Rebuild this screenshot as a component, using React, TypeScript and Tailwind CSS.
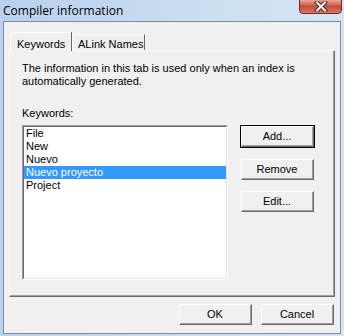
import React from 'react';

const FONT = { fontFamily: '"Liberation Sans", Arial, sans-serif' };

const KEYWORDS = ['File', 'New', 'Nuevo', 'Nuevo proyecto', 'Project'];
const SELECTED = 'Nuevo proyecto';

function Button({ label, isDefault = false }: { label: string; isDefault?: boolean }) {
  return (
    <div
      className={
        'h-[23px] w-[75px] ' + (isDefault ? 'border border-[#000]' : 'border border-transparent')
      }
    >
      <div className="h-full w-full border-l border-t border-white border-r-[#696969] border-b-[#696969] border-r border-b">
        <div className="flex h-full w-full items-center justify-center border-r border-b border-[#a0a0a0] bg-[#f0f0f0] text-[11px] text-black">
          {label}
        </div>
      </div>
    </div>
  );
}

function CloseButton() {
  return (
    <div className="mt-[-1px] flex h-[15px] w-[43px] items-center justify-center rounded-b-[4px] border border-[#6b2d25] bg-gradient-to-b from-[#e8a699] via-[#c8493a] to-[#d8786a]">
      <svg width="14" height="11" viewBox="0 0 14 11">
        <path d="M3 1.5 L11 9.5 M11 1.5 L3 9.5" stroke="#5a2019" strokeWidth="4" strokeLinecap="square" />
        <path d="M3 1.5 L11 9.5 M11 1.5 L3 9.5" stroke="#ffffff" strokeWidth="2" strokeLinecap="square" />
      </svg>
    </div>
  );
}

export default function App() {
  return (
    <div
      className="flex h-[336px] w-[344px] flex-col bg-gradient-to-r from-[#b9d1ec] via-[#c9dcf1] to-[#d6e5f5]"
      style={FONT}
    >
      {/* title bar */}
      <div className="flex h-[21px] items-start justify-between pl-[3px] pr-[2px]">
        <span className="pt-[2px] text-[12px] text-black" style={{ fontFamily: '"Open Sans", "Noto Sans", sans-serif' }}>
          Compiler information
        </span>
        <CloseButton />
      </div>

      {/* client area */}
      <div className="mx-[3px] mb-[2px] flex flex-1 flex-col border border-[#7d8b9c] bg-[#f0f0f0] px-[5px] pt-[10px]">
        {/* tabs */}
        <div className="relative z-10 flex h-[18px] items-end">
          <div className="mb-[-1px] ml-[1px] flex h-[19px] w-[61px] items-start border-l border-t border-white bg-[#f0f0f0] pl-[6px] pt-[3px] text-[11px] text-black shadow-[1px_0_0_#696969]">
            Keywords
          </div>
          <div className="ml-[1px] flex h-[16px] w-[73px] items-start border-l border-t border-r border-white border-r-[#696969] pl-[5px] pt-[1px] text-[11px] text-black">
            ALink Names
          </div>
        </div>

        {/* panel */}
        <div className="h-[247px] border-l border-t border-white border-r border-b border-r-[#696969] border-b-[#696969]">
          <div className="h-full border-r border-b border-[#a0a0a0] pl-[12px] pt-[11px]">
            <p className="text-[11px] leading-[13px] text-black">
              The information in this tab is used only when an index is
              <br />
              automatically generated.
            </p>
            <p className="mt-[19px] text-[11px] leading-[13px] text-black">Keywords:</p>
            <div className="mt-[5px] flex gap-[12px]">
              <div className="h-[155px] w-[206px] border-l border-t border-[#a0a0a0] border-r border-b border-r-white border-b-white">
                <div className="h-full border-l border-t border-[#696969] border-r border-b border-r-[#e3e3e3] border-b-[#e3e3e3] bg-white">
                  {KEYWORDS.map((k) => (
                    <div
                      key={k}
                      className={
                        'h-[13px] pl-[2px] text-[11px] leading-[13px] ' +
                        (k === SELECTED ? 'bg-[#3399ff] text-white' : 'text-black')
                      }
                    >
                      {k}
                    </div>
                  ))}
                </div>
              </div>
              <div className="flex flex-col">
                <Button label="Add..." isDefault />
                <div className="mt-[10px]">
                  <Button label="Remove" />
                </div>
                <div className="mt-[9px]">
                  <Button label="Edit..." />
                </div>
              </div>
            </div>
          </div>
        </div>

        {/* bottom buttons */}
        <div className="mt-[6px] flex justify-end gap-[7px]">
          <Button label="OK" />
          <Button label="Cancel" />
        </div>
      </div>
    </div>
  );
}
